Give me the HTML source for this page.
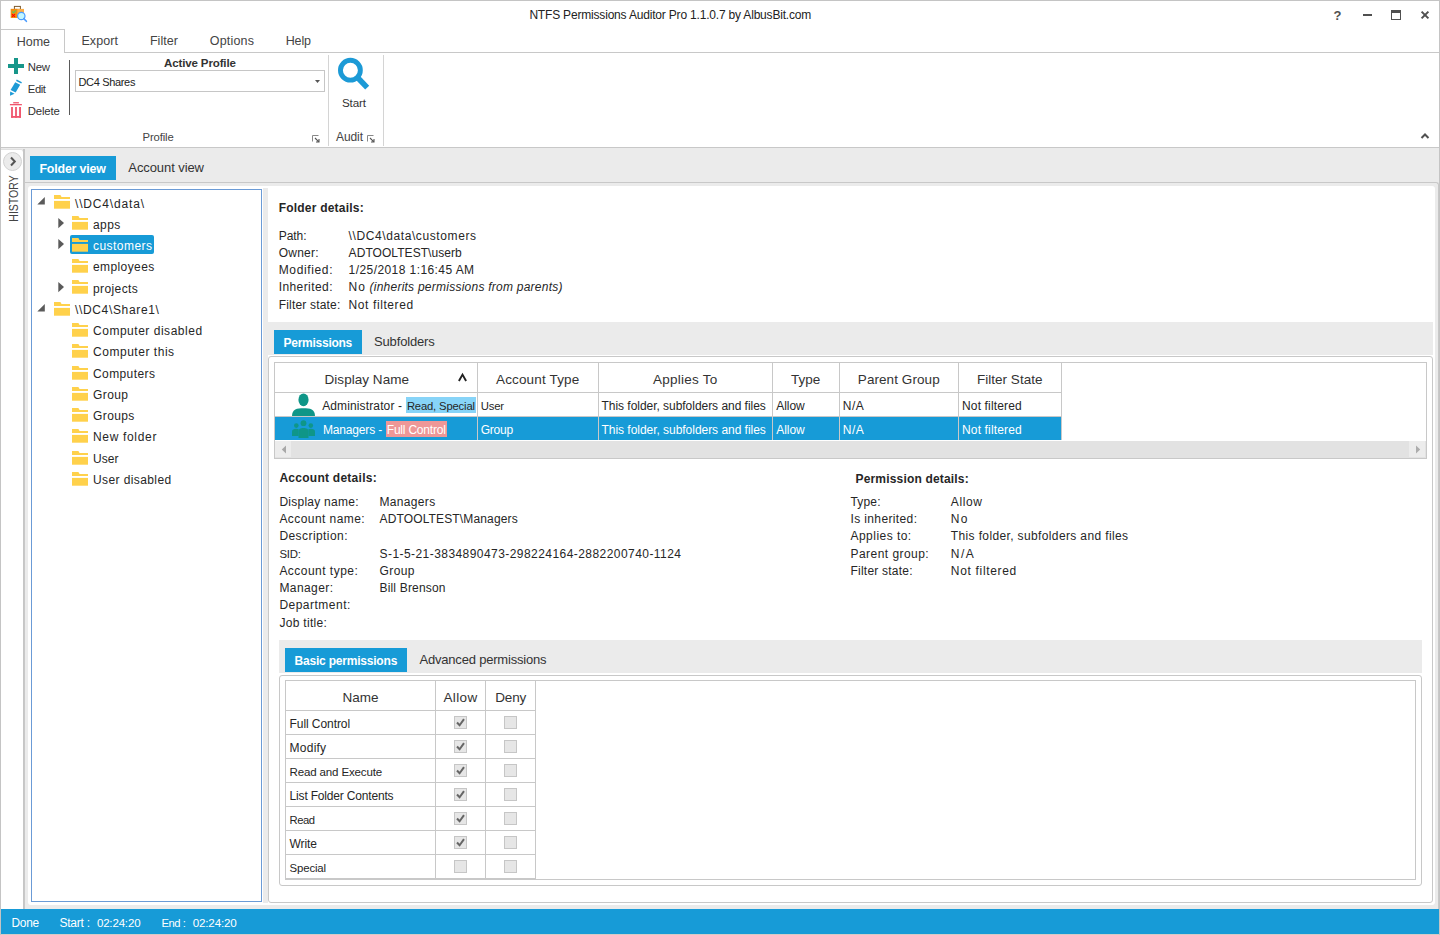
<!DOCTYPE html>
<html><head><meta charset="utf-8"><title>NTFS Permissions Auditor Pro</title>
<style>
html,body{margin:0;padding:0;width:1440px;height:935px;overflow:hidden;background:#fff}
body{position:relative;font-family:"Liberation Sans",sans-serif}
body>div,body>svg{position:absolute}
.t{white-space:pre}
</style></head><body>
<div style="left:0px;top:0px;width:1440px;height:935px;background:#fff"></div>
<div style="left:1px;top:148px;width:1438px;height:761px;background:#ebebeb"></div>
<svg style="left:8px;top:3px" width="22" height="22" viewBox="8 3 22 22">
<rect x="14.4" y="6.4" width="6" height="3" fill="none" stroke="#7d5a2e" stroke-width="1"/>
<rect x="10.8" y="8.9" width="13.2" height="9" fill="#fbae48"/>
<rect x="10.8" y="8.9" width="6.5" height="9" fill="#f28c10"/>
<path d="M12.2 11.4 L13.6 12.8 L16 10.3" stroke="#55c860" stroke-width="1.1" fill="none"/>
<path d="M12 14.2 L15 16.8 M15 14.2 L12 16.8" stroke="#ff0000" stroke-width="1.1" fill="none"/>
<circle cx="21.3" cy="16" r="3.7" fill="#c2f7ff" stroke="#4a9cff" stroke-width="1.2"/>
<path d="M23.8 18.6 L26.4 21.3" stroke="#4a9cff" stroke-width="1.6" stroke-linecap="round"/>
</svg>
<div style="left:1363px;top:14px;width:9px;height:2px;background:#505050"></div>
<div style="left:1391px;top:10px;width:10px;height:10px;border:1px solid #505050;border-top-width:3px;box-sizing:border-box"></div>
<svg style="left:1420px;top:10px" width="10" height="10" viewBox="0 0 10 10"><path d="M1.6 1.6 L8.4 8.4 M8.4 1.6 L1.6 8.4" stroke="#505050" stroke-width="2"/></svg>
<div style="left:1px;top:29px;width:64px;height:24px;border-top:1px solid #c8c8c8;border-right:1px solid #c8c8c8;background:#fff;box-sizing:border-box"></div>
<div style="left:64px;top:52px;width:1375px;height:1px;background:#c8c8c8"></div>
<div style="left:8px;top:64px;width:16px;height:4px;background:#17968a"></div>
<div style="left:14px;top:58px;width:4px;height:16px;background:#17968a"></div>
<svg style="left:9px;top:79px" width="14" height="18" viewBox="0 0 14 18">
<path d="M6.2 3.2 L11.2 5.8 L6.6 13.6 L1.6 11 Z" fill="#1c9ad6"/>
<path d="M7.4 1.2 L12.6 3.9" stroke="#1c9ad6" stroke-width="1.6"/>
<path d="M1.2 12.4 L5.6 14.8 L1 16.8 Z" fill="#1c9ad6"/>
</svg>
<svg style="left:9px;top:101px" width="14" height="18" viewBox="9 101 14 18">
<rect x="13.2" y="102.1" width="5.7" height="1.3" fill="#f0566e"/>
<rect x="9.9" y="104" width="12" height="1.3" fill="#f0566e"/>
<rect x="11.1" y="107" width="1.8" height="10.8" fill="#f0566e"/>
<rect x="15.1" y="107" width="1.8" height="10.8" fill="#f0566e"/>
<rect x="19.1" y="107" width="1.9" height="10.8" fill="#f0566e"/>
<rect x="11.1" y="116" width="9.9" height="1.8" fill="#f0566e"/>
</svg>
<div style="left:69px;top:60px;width:1px;height:55px;background:#5a5a5a"></div>
<div style="left:75px;top:70px;width:250px;height:22px;border:1px solid #c6c6c6;box-sizing:border-box;background:#fff"></div>
<svg style="left:315px;top:80px" width="5" height="3" viewBox="0 0 5 3"><path d="M0 0 H5 L2.5 3 Z" fill="#555"/></svg>
<svg style="left:312px;top:135px" width="8" height="8" viewBox="0 0 8 8"><path d="M0.5 6.5 V0.5 H6.5" fill="none" stroke="#888" stroke-width="1"/><path d="M3 3 L6.8 6.8 M7 4 V7 H4" fill="none" stroke="#555" stroke-width="1.1"/></svg>
<div style="left:328px;top:55px;width:1px;height:91px;background:#d4d4d4"></div>
<svg style="left:336px;top:57px" width="36" height="36" viewBox="0 0 36 36">
<circle cx="14.4" cy="13.2" r="9.95" fill="none" stroke="#1c9ad6" stroke-width="4.9"/>
<path d="M20.8 19.8 L31.2 30.6" stroke="#1c9ad6" stroke-width="5.6"/>
</svg>
<svg style="left:367px;top:135px" width="8" height="8" viewBox="0 0 8 8"><path d="M0.5 6.5 V0.5 H6.5" fill="none" stroke="#888" stroke-width="1"/><path d="M3 3 L6.8 6.8 M7 4 V7 H4" fill="none" stroke="#555" stroke-width="1.1"/></svg>
<div style="left:383px;top:55px;width:1px;height:91px;background:#d4d4d4"></div>
<svg style="left:1420px;top:132px" width="10" height="8" viewBox="0 0 10 8"><path d="M1.5 6 L5 2.5 L8.5 6" fill="none" stroke="#505050" stroke-width="2"/></svg>
<div style="left:1px;top:147px;width:1438px;height:1px;background:#c8c8c8"></div>
<div style="left:1px;top:149px;width:23px;height:760px;background:#fff;border-right:1px solid #c6c6c6;border-top:1px solid #e0e0e0;border-top-right-radius:3px;box-sizing:border-box"></div>
<div style="left:23px;top:149px;width:2px;height:760px;background:#c6c6c6"></div>
<div style="left:3px;top:152px;width:19px;height:19px;border-radius:50%;background:#ebebeb;border:1px solid #d2d2d2;box-sizing:border-box"></div>
<svg style="left:9px;top:156px" width="8" height="11" viewBox="0 0 8 11"><path d="M2 1.5 L5.8 5.5 L2 9.5" fill="none" stroke="#555" stroke-width="2"/></svg>
<div style="left:-16.9px;top:191.5px;width:60px;height:13px;transform:rotate(-90deg) scaleX(0.81);font:13px/13px 'Liberation Sans';color:#444;text-align:center;white-space:pre">HISTORY</div>
<div style="left:30px;top:156px;width:86px;height:24px;background:#179bd7"></div>
<div style="left:24px;top:182px;width:1415px;height:727px;border:1px solid #c8c8c8;border-bottom:none;border-top-right-radius:3px;box-sizing:border-box;background:#ebebeb"></div>
<div style="left:28px;top:186px;width:1407px;height:719px;background:#fff;border-radius:3px"></div>
<div style="left:31px;top:189px;width:231px;height:713px;border:1px solid #6b9bd6;box-sizing:border-box;background:#fff"></div>
<div style="left:263px;top:188px;width:5px;height:715px;background:#ebebeb"></div>
<svg style="left:54px;top:195.1px" width="16" height="14" viewBox="0 0 16 14"><path d="M0 0 H6.4 L7.6 2 H16 V4 H0 Z" fill="#ffd14b"/><rect x="0" y="5.9" width="16" height="7.8" fill="#ffd14b"/></svg>
<svg style="left:37px;top:197.1px" width="8" height="8" viewBox="0 0 8 8"><path d="M7.8 0 V7.5 H0.3 Z" fill="#5a5a5a"/></svg>
<svg style="left:72px;top:216.4px" width="16" height="14" viewBox="0 0 16 14"><path d="M0 0 H6.4 L7.6 2 H16 V4 H0 Z" fill="#ffd14b"/><rect x="0" y="5.9" width="16" height="7.8" fill="#ffd14b"/></svg>
<svg style="left:58px;top:217.6px" width="7" height="11" viewBox="0 0 7 11"><path d="M0.3 0 L6 5 L0.3 10.2 Z" fill="#5a5a5a"/></svg>
<div style="left:70px;top:235.1px;width:84px;height:18.5px;background:#179bd7;border-radius:2px"></div>
<svg style="left:72px;top:237.7px" width="16" height="14" viewBox="0 0 16 14"><path d="M0 0 H6.4 L7.6 2 H16 V4 H0 Z" fill="#ffd14b"/><rect x="0" y="5.9" width="16" height="7.8" fill="#ffd14b"/></svg>
<svg style="left:58px;top:238.9px" width="7" height="11" viewBox="0 0 7 11"><path d="M0.3 0 L6 5 L0.3 10.2 Z" fill="#5a5a5a"/></svg>
<svg style="left:72px;top:259.0px" width="16" height="14" viewBox="0 0 16 14"><path d="M0 0 H6.4 L7.6 2 H16 V4 H0 Z" fill="#ffd14b"/><rect x="0" y="5.9" width="16" height="7.8" fill="#ffd14b"/></svg>
<svg style="left:72px;top:280.3px" width="16" height="14" viewBox="0 0 16 14"><path d="M0 0 H6.4 L7.6 2 H16 V4 H0 Z" fill="#ffd14b"/><rect x="0" y="5.9" width="16" height="7.8" fill="#ffd14b"/></svg>
<svg style="left:58px;top:281.5px" width="7" height="11" viewBox="0 0 7 11"><path d="M0.3 0 L6 5 L0.3 10.2 Z" fill="#5a5a5a"/></svg>
<svg style="left:54px;top:301.6px" width="16" height="14" viewBox="0 0 16 14"><path d="M0 0 H6.4 L7.6 2 H16 V4 H0 Z" fill="#ffd14b"/><rect x="0" y="5.9" width="16" height="7.8" fill="#ffd14b"/></svg>
<svg style="left:37px;top:303.6px" width="8" height="8" viewBox="0 0 8 8"><path d="M7.8 0 V7.5 H0.3 Z" fill="#5a5a5a"/></svg>
<svg style="left:72px;top:322.9px" width="16" height="14" viewBox="0 0 16 14"><path d="M0 0 H6.4 L7.6 2 H16 V4 H0 Z" fill="#ffd14b"/><rect x="0" y="5.9" width="16" height="7.8" fill="#ffd14b"/></svg>
<svg style="left:72px;top:344.2px" width="16" height="14" viewBox="0 0 16 14"><path d="M0 0 H6.4 L7.6 2 H16 V4 H0 Z" fill="#ffd14b"/><rect x="0" y="5.9" width="16" height="7.8" fill="#ffd14b"/></svg>
<svg style="left:72px;top:365.5px" width="16" height="14" viewBox="0 0 16 14"><path d="M0 0 H6.4 L7.6 2 H16 V4 H0 Z" fill="#ffd14b"/><rect x="0" y="5.9" width="16" height="7.8" fill="#ffd14b"/></svg>
<svg style="left:72px;top:386.8px" width="16" height="14" viewBox="0 0 16 14"><path d="M0 0 H6.4 L7.6 2 H16 V4 H0 Z" fill="#ffd14b"/><rect x="0" y="5.9" width="16" height="7.8" fill="#ffd14b"/></svg>
<svg style="left:72px;top:408.1px" width="16" height="14" viewBox="0 0 16 14"><path d="M0 0 H6.4 L7.6 2 H16 V4 H0 Z" fill="#ffd14b"/><rect x="0" y="5.9" width="16" height="7.8" fill="#ffd14b"/></svg>
<svg style="left:72px;top:429.4px" width="16" height="14" viewBox="0 0 16 14"><path d="M0 0 H6.4 L7.6 2 H16 V4 H0 Z" fill="#ffd14b"/><rect x="0" y="5.9" width="16" height="7.8" fill="#ffd14b"/></svg>
<svg style="left:72px;top:450.7px" width="16" height="14" viewBox="0 0 16 14"><path d="M0 0 H6.4 L7.6 2 H16 V4 H0 Z" fill="#ffd14b"/><rect x="0" y="5.9" width="16" height="7.8" fill="#ffd14b"/></svg>
<svg style="left:72px;top:472.0px" width="16" height="14" viewBox="0 0 16 14"><path d="M0 0 H6.4 L7.6 2 H16 V4 H0 Z" fill="#ffd14b"/><rect x="0" y="5.9" width="16" height="7.8" fill="#ffd14b"/></svg>
<div style="left:263px;top:322px;width:1170px;height:33px;background:#ebebeb"></div>
<div style="left:274px;top:330px;width:88px;height:24px;background:#179bd7"></div>
<div style="left:268px;top:356px;width:1165px;height:547px;border:1px solid #c8c8c8;border-radius:3px;box-sizing:border-box;background:#fff"></div>
<div style="left:274px;top:362px;width:1153px;height:97px;border:1px solid #c8c8c8;box-sizing:border-box;background:#fff"></div>
<div style="left:275px;top:392px;width:787px;height:1px;background:#c8c8c8"></div>
<div style="left:275px;top:416px;width:787px;height:1px;background:#c8c8c8"></div>
<div style="left:275px;top:417px;width:787px;height:23px;background:#179bd7"></div>
<div style="left:477px;top:363px;width:1px;height:77px;background:#c8c8c8"></div>
<div style="left:598px;top:363px;width:1px;height:77px;background:#c8c8c8"></div>
<div style="left:772px;top:363px;width:1px;height:77px;background:#c8c8c8"></div>
<div style="left:839px;top:363px;width:1px;height:77px;background:#c8c8c8"></div>
<div style="left:958px;top:363px;width:1px;height:77px;background:#c8c8c8"></div>
<div style="left:1061px;top:363px;width:1px;height:77px;background:#c8c8c8"></div>
<div style="left:275px;top:440.5px;width:1151px;height:17px;background:#e2e2e2"></div>
<div style="left:275px;top:441px;width:16px;height:16px;background:#ececec"></div>
<svg style="left:281px;top:445px" width="6" height="9" viewBox="0 0 6 9"><path d="M5 0.5 V8.5 L0.8 4.5 Z" fill="#a8a8a8"/></svg>
<div style="left:1409px;top:441px;width:16px;height:16px;background:#ececec"></div>
<svg style="left:1415px;top:445px" width="6" height="9" viewBox="0 0 6 9"><path d="M1 0.5 V8.5 L5.2 4.5 Z" fill="#acacac"/></svg>
<svg style="left:457px;top:372px" width="11" height="11" viewBox="0 0 11 11"><path d="M1.9 9 L5.5 2.6 L9.1 9" fill="none" stroke="#222" stroke-width="1.9" stroke-linejoin="miter"/></svg>
<svg style="left:291px;top:393px" width="25" height="24" viewBox="0 0 25 24">
<ellipse cx="12.5" cy="6.8" rx="5.1" ry="6.4" fill="#0f9688"/>
<path d="M1 23 C1 16 6 15.2 12.5 15.2 C19 15.2 24 16 24 23 Z" fill="#0f9688"/>
</svg>
<svg style="left:291px;top:417px" width="25" height="23" viewBox="0 0 25 23">
<circle cx="12.5" cy="6.2" r="2.9" fill="#0f9688"/>
<circle cx="5.3" cy="8.6" r="2.3" fill="#0f9688"/>
<circle cx="19.8" cy="8.6" r="2.3" fill="#0f9688"/>
<path d="M7.5 21 V14.5 C7.5 11.8 9.6 11 12.5 11 C15.4 11 17.5 11.8 17.5 14.5 V21 Z" fill="#0f9688"/>
<path d="M1 19 V14.5 C1 12.6 2.8 11.8 5.2 11.8 C6.2 11.8 7 12 7.6 12.3 V19 Z" fill="#0f9688"/>
<path d="M24 19 V14.5 C24 12.6 22.2 11.8 19.8 11.8 C18.8 11.8 18 12 17.4 12.3 V19 Z" fill="#0f9688"/>
</svg>
<div style="left:406px;top:397px;width:70px;height:16px;background:#87d4f8"></div>
<div style="left:386px;top:421px;width:61px;height:16px;background:#ee9797"></div>
<div style="left:279px;top:640px;width:1143px;height:33px;background:#ebebeb"></div>
<div style="left:285px;top:648px;width:122px;height:24px;background:#179bd7"></div>
<div style="left:279px;top:675px;width:1143px;height:211px;border:1px solid #c8c8c8;border-radius:3px;box-sizing:border-box;background:#fff"></div>
<div style="left:285px;top:680px;width:1131px;height:200px;border:1px solid #c8c8c8;box-sizing:border-box;background:#fff"></div>
<div style="left:435px;top:681px;width:1px;height:198px;background:#c8c8c8"></div>
<div style="left:485px;top:681px;width:1px;height:198px;background:#c8c8c8"></div>
<div style="left:535px;top:681px;width:1px;height:198px;background:#c8c8c8"></div>
<div style="left:286px;top:710px;width:250px;height:1px;background:#c8c8c8"></div>
<div style="left:286px;top:734px;width:250px;height:1px;background:#c8c8c8"></div>
<div style="left:286px;top:758px;width:250px;height:1px;background:#c8c8c8"></div>
<div style="left:286px;top:782px;width:250px;height:1px;background:#c8c8c8"></div>
<div style="left:286px;top:806px;width:250px;height:1px;background:#c8c8c8"></div>
<div style="left:286px;top:830px;width:250px;height:1px;background:#c8c8c8"></div>
<div style="left:286px;top:854px;width:250px;height:1px;background:#c8c8c8"></div>
<div style="left:286px;top:878px;width:250px;height:1px;background:#c8c8c8"></div>
<div style="left:454px;top:716px;width:13px;height:13px;background:#e6e6e6;border:1px solid #c6c6c6;box-sizing:border-box"></div>
<div style="left:504px;top:716px;width:13px;height:13px;background:#e6e6e6;border:1px solid #c6c6c6;box-sizing:border-box"></div>
<svg style="left:454px;top:716px" width="13" height="13" viewBox="0 0 13 13"><path d="M3 6.5 L5.6 9.3 L10 3.2" fill="none" stroke="#666" stroke-width="2"/></svg>
<div style="left:454px;top:740px;width:13px;height:13px;background:#e6e6e6;border:1px solid #c6c6c6;box-sizing:border-box"></div>
<div style="left:504px;top:740px;width:13px;height:13px;background:#e6e6e6;border:1px solid #c6c6c6;box-sizing:border-box"></div>
<svg style="left:454px;top:740px" width="13" height="13" viewBox="0 0 13 13"><path d="M3 6.5 L5.6 9.3 L10 3.2" fill="none" stroke="#666" stroke-width="2"/></svg>
<div style="left:454px;top:764px;width:13px;height:13px;background:#e6e6e6;border:1px solid #c6c6c6;box-sizing:border-box"></div>
<div style="left:504px;top:764px;width:13px;height:13px;background:#e6e6e6;border:1px solid #c6c6c6;box-sizing:border-box"></div>
<svg style="left:454px;top:764px" width="13" height="13" viewBox="0 0 13 13"><path d="M3 6.5 L5.6 9.3 L10 3.2" fill="none" stroke="#666" stroke-width="2"/></svg>
<div style="left:454px;top:788px;width:13px;height:13px;background:#e6e6e6;border:1px solid #c6c6c6;box-sizing:border-box"></div>
<div style="left:504px;top:788px;width:13px;height:13px;background:#e6e6e6;border:1px solid #c6c6c6;box-sizing:border-box"></div>
<svg style="left:454px;top:788px" width="13" height="13" viewBox="0 0 13 13"><path d="M3 6.5 L5.6 9.3 L10 3.2" fill="none" stroke="#666" stroke-width="2"/></svg>
<div style="left:454px;top:812px;width:13px;height:13px;background:#e6e6e6;border:1px solid #c6c6c6;box-sizing:border-box"></div>
<div style="left:504px;top:812px;width:13px;height:13px;background:#e6e6e6;border:1px solid #c6c6c6;box-sizing:border-box"></div>
<svg style="left:454px;top:812px" width="13" height="13" viewBox="0 0 13 13"><path d="M3 6.5 L5.6 9.3 L10 3.2" fill="none" stroke="#666" stroke-width="2"/></svg>
<div style="left:454px;top:836px;width:13px;height:13px;background:#e6e6e6;border:1px solid #c6c6c6;box-sizing:border-box"></div>
<div style="left:504px;top:836px;width:13px;height:13px;background:#e6e6e6;border:1px solid #c6c6c6;box-sizing:border-box"></div>
<svg style="left:454px;top:836px" width="13" height="13" viewBox="0 0 13 13"><path d="M3 6.5 L5.6 9.3 L10 3.2" fill="none" stroke="#666" stroke-width="2"/></svg>
<div style="left:454px;top:860px;width:13px;height:13px;background:#e6e6e6;border:1px solid #c6c6c6;box-sizing:border-box"></div>
<div style="left:504px;top:860px;width:13px;height:13px;background:#e6e6e6;border:1px solid #c6c6c6;box-sizing:border-box"></div>
<div style="left:1px;top:909px;width:1438px;height:25px;background:#179bd7"></div>
<div style="left:0px;top:934px;width:1440px;height:1px;background:#d4ccc6"></div>
<div style="left:0px;top:0px;width:1440px;height:1px;background:#c4c4c4"></div>
<div style="left:0px;top:0px;width:1px;height:935px;background:#c4c4c4"></div>
<div style="left:1439px;top:0px;width:1px;height:935px;background:#c4c4c4"></div>
<div class="t" style="left:529.4px;top:9px;font-size:12px;line-height:12px;color:#222;letter-spacing:-0.187px;">NTFS Permissions Auditor Pro 1.1.0.7 by AlbusBit.com</div>
<div class="t" style="left:1333.5px;top:9px;font-size:13px;line-height:13px;color:#505050;font-weight:bold;">?</div>
<div class="t" style="left:16.7px;top:36px;font-size:12.5px;line-height:12.5px;color:#444;letter-spacing:-0.015px;">Home</div>
<div class="t" style="left:81.4px;top:35px;font-size:12.5px;line-height:12.5px;color:#444;letter-spacing:0.092px;">Export</div>
<div class="t" style="left:149.9px;top:35px;font-size:12.5px;line-height:12.5px;color:#444;letter-spacing:0.064px;">Filter</div>
<div class="t" style="left:209.8px;top:35px;font-size:12.5px;line-height:12.5px;color:#444;letter-spacing:0.184px;">Options</div>
<div class="t" style="left:285.7px;top:35px;font-size:12.5px;line-height:12.5px;color:#444;letter-spacing:-0.140px;">Help</div>
<div class="t" style="left:27.8px;top:62px;font-size:11.39px;line-height:11.39px;color:#333;letter-spacing:-0.300px;">New</div>
<div class="t" style="left:27.8px;top:84px;font-size:11.25px;line-height:11.25px;color:#333;letter-spacing:-0.398px;">Edit</div>
<div class="t" style="left:27.8px;top:106px;font-size:11.4px;line-height:11.4px;color:#333;letter-spacing:-0.173px;">Delete</div>
<div class="t" style="left:164.0px;top:58px;font-size:11.56px;line-height:11.56px;color:#333;font-weight:bold;letter-spacing:-0.148px;">Active Profile</div>
<div class="t" style="left:78.5px;top:77px;font-size:11px;line-height:11px;color:#222;letter-spacing:-0.336px;">DC4 Shares</div>
<div class="t" style="left:142.6px;top:132px;font-size:11.27px;line-height:11.27px;color:#444;letter-spacing:-0.142px;">Profile</div>
<div class="t" style="left:342.0px;top:97px;font-size:11.66px;line-height:11.66px;color:#333;letter-spacing:-0.158px;">Start</div>
<div class="t" style="left:336.0px;top:131px;font-size:12px;line-height:12px;color:#444;letter-spacing:-0.090px;">Audit</div>
<div class="t" style="left:39.4px;top:163px;font-size:12.4px;line-height:12.4px;color:#fff;font-weight:bold;letter-spacing:-0.165px;">Folder view</div>
<div class="t" style="left:128.3px;top:161px;font-size:13px;line-height:13px;color:#333;letter-spacing:-0.081px;">Account view</div>
<div class="t" style="left:75.0px;top:198px;font-size:12px;line-height:12px;color:#262626;letter-spacing:0.830px;">\\DC4\data\</div>
<div class="t" style="left:93.0px;top:219px;font-size:12px;line-height:12px;color:#262626;letter-spacing:0.400px;">apps</div>
<div class="t" style="left:93.0px;top:240px;font-size:12px;line-height:12px;color:#fff;letter-spacing:0.455px;">customers</div>
<div class="t" style="left:93.0px;top:261px;font-size:12px;line-height:12px;color:#262626;letter-spacing:0.400px;">employees</div>
<div class="t" style="left:93.0px;top:283px;font-size:12px;line-height:12px;color:#262626;letter-spacing:0.400px;">projects</div>
<div class="t" style="left:75.0px;top:304px;font-size:12px;line-height:12px;color:#262626;letter-spacing:0.654px;">\\DC4\Share1\</div>
<div class="t" style="left:93.0px;top:325px;font-size:12px;line-height:12px;color:#262626;letter-spacing:0.523px;">Computer disabled</div>
<div class="t" style="left:93.0px;top:346px;font-size:12px;line-height:12px;color:#262626;letter-spacing:0.533px;">Computer this</div>
<div class="t" style="left:93.0px;top:368px;font-size:12px;line-height:12px;color:#262626;letter-spacing:0.400px;">Computers</div>
<div class="t" style="left:93.0px;top:389px;font-size:12px;line-height:12px;color:#262626;letter-spacing:0.400px;">Group</div>
<div class="t" style="left:93.0px;top:410px;font-size:12px;line-height:12px;color:#262626;letter-spacing:0.400px;">Groups</div>
<div class="t" style="left:93.0px;top:431px;font-size:12px;line-height:12px;color:#262626;letter-spacing:0.671px;">New folder</div>
<div class="t" style="left:93.0px;top:453px;font-size:12px;line-height:12px;color:#262626;letter-spacing:0.019px;">User</div>
<div class="t" style="left:93.0px;top:474px;font-size:12px;line-height:12px;color:#262626;letter-spacing:0.400px;">User disabled</div>
<div class="t" style="left:278.7px;top:202px;font-size:12px;line-height:12px;color:#262626;font-weight:bold;letter-spacing:0.213px;">Folder details:</div>
<div class="t" style="left:278.7px;top:230px;font-size:12px;line-height:12px;color:#262626;letter-spacing:-0.033px;">Path:</div>
<div class="t" style="left:348.6px;top:230px;font-size:12px;line-height:12px;color:#262626;letter-spacing:0.598px;">\\DC4\data\customers</div>
<div class="t" style="left:278.7px;top:247px;font-size:12px;line-height:12px;color:#262626;letter-spacing:0.222px;">Owner:</div>
<div class="t" style="left:348.6px;top:247px;font-size:12px;line-height:12px;color:#262626;letter-spacing:0.062px;">ADTOOLTEST\userb</div>
<div class="t" style="left:278.7px;top:264px;font-size:12px;line-height:12px;color:#262626;letter-spacing:0.637px;">Modified:</div>
<div class="t" style="left:348.6px;top:264px;font-size:12px;line-height:12px;color:#262626;letter-spacing:0.424px;">1/25/2018 1:16:45 AM</div>
<div class="t" style="left:278.7px;top:281px;font-size:12px;line-height:12px;color:#262626;letter-spacing:0.417px;">Inherited:</div>
<div class="t" style="left:348.6px;top:281px;font-size:12px;line-height:12px;color:#262626;letter-spacing:1.056px;">No</div>
<div class="t" style="left:278.7px;top:299px;font-size:12px;line-height:12px;color:#262626;letter-spacing:0.187px;">Filter state:</div>
<div class="t" style="left:348.6px;top:299px;font-size:12px;line-height:12px;color:#262626;letter-spacing:0.588px;">Not filtered</div>
<div class="t" style="left:369.5px;top:281px;font-size:12px;line-height:12px;color:#262626;font-style:italic;letter-spacing:0.243px;">(inherits permissions from parents)</div>
<div class="t" style="left:283.5px;top:337px;font-size:12px;line-height:12px;color:#fff;font-weight:bold;letter-spacing:-0.258px;">Permissions</div>
<div class="t" style="left:374.0px;top:335px;font-size:13px;line-height:13px;color:#333;letter-spacing:-0.151px;">Subfolders</div>
<div class="t" style="left:324.5px;top:373px;font-size:13.5px;line-height:13.5px;color:#333;letter-spacing:0.043px;">Display Name</div>
<div class="t" style="left:496.0px;top:373px;font-size:13.5px;line-height:13.5px;color:#333;letter-spacing:0.149px;">Account Type</div>
<div class="t" style="left:652.9px;top:373px;font-size:13.5px;line-height:13.5px;color:#333;letter-spacing:0.250px;">Applies To</div>
<div class="t" style="left:791.0px;top:373px;font-size:13.5px;line-height:13.5px;color:#333;">Type</div>
<div class="t" style="left:857.8px;top:373px;font-size:13.5px;line-height:13.5px;color:#333;letter-spacing:0.078px;">Parent Group</div>
<div class="t" style="left:976.9px;top:373px;font-size:13.5px;line-height:13.5px;color:#333;letter-spacing:0.029px;">Filter State</div>
<div class="t" style="left:322.2px;top:400px;font-size:12px;line-height:12px;color:#262626;letter-spacing:0.126px;">Administrator -</div>
<div class="t" style="left:406.9px;top:401px;font-size:11.24px;line-height:11.24px;color:#262626;letter-spacing:-0.156px;">Read, Special</div>
<div class="t" style="left:480.8px;top:401px;font-size:11.33px;line-height:11.33px;color:#262626;letter-spacing:-0.211px;">User</div>
<div class="t" style="left:601.5px;top:400px;font-size:12px;line-height:12px;color:#262626;letter-spacing:-0.035px;">This folder, subfolders and files</div>
<div class="t" style="left:776.2px;top:400px;font-size:12px;line-height:12px;color:#262626;letter-spacing:-0.047px;">Allow</div>
<div class="t" style="left:842.8px;top:400px;font-size:12px;line-height:12px;color:#262626;letter-spacing:0.442px;">N/A</div>
<div class="t" style="left:962.0px;top:400px;font-size:12px;line-height:12px;color:#262626;letter-spacing:0.152px;">Not filtered</div>
<div class="t" style="left:322.9px;top:424px;font-size:12px;line-height:12px;color:#fff;letter-spacing:-0.156px;">Managers -</div>
<div class="t" style="left:386.8px;top:424px;font-size:12px;line-height:12px;color:#fff;letter-spacing:-0.214px;">Full Control</div>
<div class="t" style="left:480.8px;top:424px;font-size:12px;line-height:12px;color:#fff;letter-spacing:-0.265px;">Group</div>
<div class="t" style="left:601.5px;top:424px;font-size:12px;line-height:12px;color:#fff;letter-spacing:-0.035px;">This folder, subfolders and files</div>
<div class="t" style="left:776.2px;top:424px;font-size:12px;line-height:12px;color:#fff;letter-spacing:-0.047px;">Allow</div>
<div class="t" style="left:842.8px;top:424px;font-size:12px;line-height:12px;color:#fff;letter-spacing:0.442px;">N/A</div>
<div class="t" style="left:962.0px;top:424px;font-size:12px;line-height:12px;color:#fff;letter-spacing:0.152px;">Not filtered</div>
<div class="t" style="left:279.4px;top:472px;font-size:12px;line-height:12px;color:#262626;font-weight:bold;letter-spacing:0.263px;">Account details:</div>
<div class="t" style="left:279.4px;top:496px;font-size:12px;line-height:12px;color:#262626;letter-spacing:0.256px;">Display name:</div>
<div class="t" style="left:379.5px;top:496px;font-size:12px;line-height:12px;color:#262626;letter-spacing:0.332px;">Managers</div>
<div class="t" style="left:279.4px;top:513px;font-size:12px;line-height:12px;color:#262626;letter-spacing:0.438px;">Account name:</div>
<div class="t" style="left:379.5px;top:513px;font-size:12px;line-height:12px;color:#262626;letter-spacing:0.144px;">ADTOOLTEST\Managers</div>
<div class="t" style="left:279.4px;top:530px;font-size:12px;line-height:12px;color:#262626;letter-spacing:0.431px;">Description:</div>
<div class="t" style="left:279.4px;top:549px;font-size:11.4px;line-height:11.4px;color:#262626;letter-spacing:-0.195px;">SID:</div>
<div class="t" style="left:379.5px;top:548px;font-size:12px;line-height:12px;color:#262626;letter-spacing:0.442px;">S-1-5-21-3834890473-298224164-2882200740-1124</div>
<div class="t" style="left:279.4px;top:565px;font-size:12px;line-height:12px;color:#262626;letter-spacing:0.473px;">Account type:</div>
<div class="t" style="left:379.5px;top:565px;font-size:12px;line-height:12px;color:#262626;letter-spacing:0.410px;">Group</div>
<div class="t" style="left:279.4px;top:582px;font-size:12px;line-height:12px;color:#262626;letter-spacing:0.414px;">Manager:</div>
<div class="t" style="left:379.5px;top:582px;font-size:12px;line-height:12px;color:#262626;letter-spacing:0.179px;">Bill Brenson</div>
<div class="t" style="left:279.4px;top:599px;font-size:12px;line-height:12px;color:#262626;letter-spacing:0.487px;">Department:</div>
<div class="t" style="left:279.4px;top:617px;font-size:12px;line-height:12px;color:#262626;letter-spacing:0.311px;">Job title:</div>
<div class="t" style="left:855.5px;top:473px;font-size:12px;line-height:12px;color:#262626;font-weight:bold;letter-spacing:0.175px;">Permission details:</div>
<div class="t" style="left:850.5px;top:496px;font-size:12px;line-height:12px;color:#262626;letter-spacing:0.160px;">Type:</div>
<div class="t" style="left:950.8px;top:496px;font-size:12px;line-height:12px;color:#262626;letter-spacing:0.628px;">Allow</div>
<div class="t" style="left:850.5px;top:513px;font-size:12px;line-height:12px;color:#262626;letter-spacing:0.371px;">Is inherited:</div>
<div class="t" style="left:950.8px;top:513px;font-size:12px;line-height:12px;color:#262626;letter-spacing:1.356px;">No</div>
<div class="t" style="left:850.5px;top:530px;font-size:12px;line-height:12px;color:#262626;letter-spacing:0.465px;">Applies to:</div>
<div class="t" style="left:950.8px;top:530px;font-size:12px;line-height:12px;color:#262626;letter-spacing:0.368px;">This folder, subfolders and files</div>
<div class="t" style="left:850.5px;top:548px;font-size:12px;line-height:12px;color:#262626;letter-spacing:0.457px;">Parent group:</div>
<div class="t" style="left:950.8px;top:548px;font-size:12px;line-height:12px;color:#262626;letter-spacing:1.492px;">N/A</div>
<div class="t" style="left:850.5px;top:565px;font-size:12px;line-height:12px;color:#262626;letter-spacing:0.220px;">Filter state:</div>
<div class="t" style="left:950.8px;top:565px;font-size:12px;line-height:12px;color:#262626;letter-spacing:0.679px;">Not filtered</div>
<div class="t" style="left:294.5px;top:655px;font-size:12px;line-height:12px;color:#fff;font-weight:bold;letter-spacing:-0.203px;">Basic permissions</div>
<div class="t" style="left:419.5px;top:653px;font-size:13px;line-height:13px;color:#333;letter-spacing:-0.200px;">Advanced permissions</div>
<div class="t" style="left:342.4px;top:691px;font-size:13.5px;line-height:13.5px;color:#333;letter-spacing:0.028px;">Name</div>
<div class="t" style="left:443.5px;top:691px;font-size:13.5px;line-height:13.5px;color:#333;letter-spacing:0.359px;">Allow</div>
<div class="t" style="left:495.2px;top:691px;font-size:13.5px;line-height:13.5px;color:#333;letter-spacing:-0.139px;">Deny</div>
<div class="t" style="left:289.6px;top:718px;font-size:12px;line-height:12px;color:#262626;letter-spacing:-0.078px;">Full Control</div>
<div class="t" style="left:289.6px;top:742px;font-size:12px;line-height:12px;color:#262626;letter-spacing:0.231px;">Modify</div>
<div class="t" style="left:289.6px;top:767px;font-size:11.55px;line-height:11.55px;color:#262626;letter-spacing:-0.165px;">Read and Execute</div>
<div class="t" style="left:289.6px;top:790px;font-size:12px;line-height:12px;color:#262626;letter-spacing:-0.178px;">List Folder Contents</div>
<div class="t" style="left:289.6px;top:815px;font-size:11.25px;line-height:11.25px;color:#262626;letter-spacing:-0.498px;">Read</div>
<div class="t" style="left:289.6px;top:838px;font-size:12px;line-height:12px;color:#262626;letter-spacing:-0.095px;">Write</div>
<div class="t" style="left:289.6px;top:863px;font-size:11.43px;line-height:11.43px;color:#262626;letter-spacing:-0.164px;">Special</div>
<div class="t" style="left:11.5px;top:918px;font-size:11.89px;line-height:11.89px;color:#fff;letter-spacing:-0.239px;">Done</div>
<div class="t" style="left:59.4px;top:917px;font-size:12px;line-height:12px;color:#fff;letter-spacing:-0.236px;">Start :</div>
<div class="t" style="left:96.9px;top:918px;font-size:11.52px;line-height:11.52px;color:#fff;letter-spacing:-0.167px;">02:24:20</div>
<div class="t" style="left:161.5px;top:918px;font-size:11.25px;line-height:11.25px;color:#fff;letter-spacing:-0.445px;">End :</div>
<div class="t" style="left:192.7px;top:917px;font-size:11.65px;line-height:11.65px;color:#fff;letter-spacing:-0.167px;">02:24:20</div>
</body></html>
